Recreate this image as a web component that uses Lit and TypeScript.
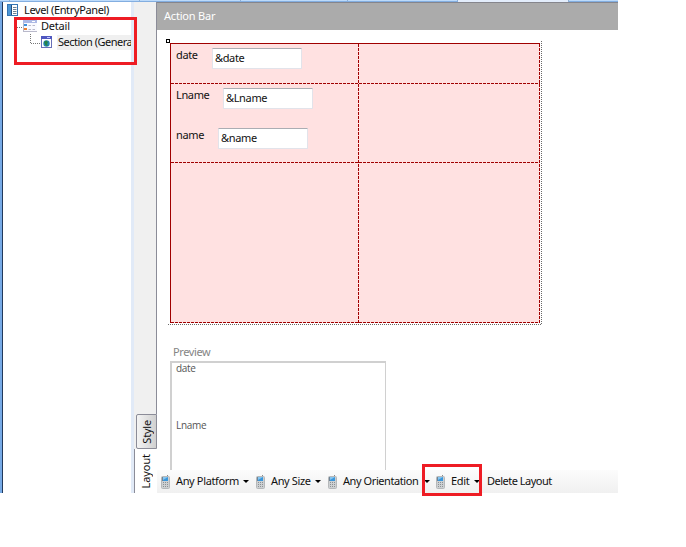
import { LitElement, html, css, svg } from "lit";
import { customElement, property } from "lit/decorators.js";

@customElement("phone-icon")
class PhoneIcon extends LitElement {
  static styles = css`
    :host { display: block; width: 9px; height: 14px; }
    svg { display: block; }
  `;
  render() {
    const keys = [7, 9, 11].flatMap((y) =>
      [2, 4, 6].map((x) => svg`<rect x=${x} y=${y} width="1" height="1" fill="#8b9093"/>`));
    return html`<svg width="9" height="14" viewBox="0 0 9 14">
      <rect x="6" y="0" width="1" height="2" fill="#85898c"/>
      <rect x="0.5" y="1.5" width="8" height="12" rx="1" fill="#cdd0d2" stroke="#b5b8ba" stroke-width="1"/>
      <rect x="2" y="2" width="5" height="4" fill="#3a97dc"/>
      <path d="M2 2H7L2 5Z" fill="#86c5f0"/>
      <path d="M1.5 6V2" stroke="#6f8496" stroke-width="1"/>
      ${keys}
    </svg>`;
  }
}

@customElement("form-field")
class FormField extends LitElement {
  @property() label = "";
  @property() variable = "";
  static styles = css`
    :host { display: flex; align-items: flex-start; height: 40px; box-sizing: border-box; padding: 4px 0 0 5px; }
    .label { line-height: 14px; white-space: nowrap; width: var(--label-width); }
    .input {
      box-sizing: border-box; width: 90px; height: 21px; background: #fff;
      border: 1px solid #e2e3ea; border-top-color: #abadb3; border-radius: 1px;
      padding-left: 2px; line-height: 18px; white-space: nowrap;
    }
  `;
  render() {
    return html`<span class="label">${this.label}</span><div class="input">${this.variable}</div>`;
  }
}

@customElement("app-root")
class AppRoot extends LitElement {
  static styles = css`
    :host {
      display: block; position: relative; width: 686px; height: 547px; overflow: hidden;
      background: #fff; color: #111; font: 11px/14px "Noto Sans", "Open Sans", sans-serif;
      letter-spacing: -0.2px; --red: #a00000;
    }
    .window { display: grid; width: 618px; height: 493px; grid-template: 2px 491px / 3px 128px 3px 23px 461px; }
    .top { grid-column: 1 / -1; display: flex; background: #bcdafa; border-bottom: 1px solid #83aee0; box-sizing: border-box; }
    .top i { box-sizing: border-box; border-right: 1px solid #8eaed3; height: 1px; }
    .t1 { width: 10px; } .t2 { width: 130px; } .t3 { width: 101px; } .t4 { width: 107px; } .t5 { width: 110px; }
    .top .t6 { width: 111px; height: 2px; background: #e3edfb; }
    .edge { box-sizing: border-box; background: #76aae6; border-right: 1px solid #22395c; }
    .tree { overflow: hidden; }
    .node { display: flex; align-items: center; height: 16px; white-space: nowrap; }
    .node svg { flex: none; }
    .root { padding-left: 4px; }
    .detail { padding-left: 12px; }
    .section { padding-left: 27px; }
    .node span { line-height: 14px; padding-bottom: 0; }
    .root span { padding-left: 5px; letter-spacing: -0.37px; }
    .detail span { padding-left: 4px; }
    .section span { background: #f0f0f0; padding: 0 0 1px 1px; margin-left: 4px; letter-spacing: -0.5px; flex: 1; }
    .split { background: #e1eaf7; }
    .tabs { display: flex; flex-direction: column; box-sizing: border-box; background: #f0f0f0; }
    .spacer { flex: 1; border-right: 1px solid #8b8c98; }
    .tab { box-sizing: border-box; display: flex; align-items: center; justify-content: center; }
    .tab span { writing-mode: vertical-rl; transform: rotate(180deg); white-space: nowrap; }
    .style { height: 35px; margin-left: 2px; border: 1px solid #8b8c98; border-radius: 2px 0 0 2px; background: linear-gradient(90deg, #f4f4f4, #d0d0d0); }
    .layout { height: 44px; border-left: 1px solid #8b8c98; background: #fff; }
    .layout span { letter-spacing: -0.1px; }
    .main { display: flex; flex-direction: column; background: #fff; }
    .main > * { flex: none; }
    .bar { box-sizing: border-box; height: 28px; background: #ababab; border-top: 1px solid #85858c; color: #fff; padding: 6px 0 0 7px; letter-spacing: -0.2px; }
    .canvas { position: relative; box-sizing: border-box; width: 374px; height: 284px; margin: 11px 0 0 11px; padding: 2px; }
    .frame-r, .frame-b, .handle, .line { position: absolute; }
    .frame-r { right: 0; top: 0; width: 1px; height: 284px; background: repeating-linear-gradient(180deg, #686868 0 1px, transparent 1px 2px); }
    .frame-b { left: 0; bottom: 0; height: 1px; width: 374px; background: repeating-linear-gradient(90deg, #686868 0 1px, transparent 1px 2px); }
    .handle { left: -2px; top: -2px; width: 2px; height: 2px; border: 1px solid #000; background: #fff; }
    .table { position: relative; display: grid; box-sizing: border-box; width: 370px; height: 280px; grid-template: 40px 79px 160px / 188px 181px; background: #ffe1e1; border-left: 1px solid var(--red); border-top: 1px solid var(--red); }
    .line.h { left: 0; width: 369px; height: 1px; background: repeating-linear-gradient(90deg, var(--red) 0 3px, transparent 3px 4px); }
    .line.v { top: 0; height: 279px; width: 1px; background: repeating-linear-gradient(180deg, var(--red) 0 3px, transparent 3px 4px); }
    .h1 { top: 39px; } .h2 { top: 118px; } .h3 { bottom: 0; }
    .v1 { left: 187px; } .v2 { right: 0; }
    .date { --label-width: 36px; } .lname { --label-width: 47px; } .name { --label-width: 42px; }
    .date, .lname, .name { letter-spacing: -0.35px; }
    .preview-title { color: #858585; margin: 20px 0 0 16px; height: 16px; line-height: 14px; letter-spacing: -0.4px; }
    .preview { box-sizing: border-box; width: 216px; height: 109px; overflow: hidden; margin-left: 13px; border: solid #d0d0d0; border-width: 2px 1px 0 2px; color: #555; font-family: "Open Sans", sans-serif; font-size: 10px; padding-left: 4px; letter-spacing: -0.3px; }
    .preview div { height: 57px; line-height: 10px; }
    .toolbar { box-sizing: border-box; height: 23px; display: flex; align-items: center; background: linear-gradient(#fcfcfc, #f0f0f0); padding-left: 4px; white-space: nowrap; letter-spacing: -0.36px; }
    .item { display: flex; align-items: center; flex: none; }
    .item span { padding: 0 0 2px 6px; flex: 1 1 0; }
    .arrow { width: 0; height: 0; border: 3px solid transparent; border-top-color: #000; border-bottom: 0; flex: none; }
    .platform { width: 88px; margin-right: 7px; }
    .size { width: 65px; margin-right: 7px; }
    .orientation { width: 102px; margin-right: 6px; letter-spacing: -0.42px; }
    .edit { width: 44px; margin-right: 7px; }
    .delete { letter-spacing: -0.5px; padding-bottom: 2px; }
    .mark { position: absolute; box-sizing: border-box; border: 3px solid #ee1c24; }
    .mark-tree { left: 14px; top: 17px; width: 123px; height: 48px; }
    .mark-edit { left: 422px; top: 464px; width: 60px; height: 32px; }
  `;

  item(name: string, label: string) {
    return html`<div class="item ${name}"><phone-icon></phone-icon><span>${label}</span><i class="arrow"></i></div>`;
  }

  render() {
    return html`
      <div class="window">
        <div class="top"><i class="t1"></i><i class="t2"></i><i class="t3"></i><i class="t4"></i><i class="t5"></i><i class="t6"></i></div>
        <div class="edge"></div>
        <div class="tree">
          <div class="node root">
            <svg width="12" height="14" viewBox="0 0 12 14">
              <rect x=".5" y="1.5" width="10" height="11" fill="#fff" stroke="#3475b5"/>
              <rect x="1" y="2" width="3" height="10" fill="#4c96d6"/>
              <path d="M4.5 2V12" stroke="#234f80"/><path d="M6 4.5H9.5M6 6.5H9.5M6 8.5H9.5M6 10.5H9.5" stroke="#6e8193"/>
            </svg><span>Level (EntryPanel)</span>
          </div>
          <div class="node detail">
            <svg width="22" height="16" viewBox="0 0 22 16">
              <path d="M.5 0V10M2 9.5H8" stroke="#777" stroke-dasharray="1 1"/>
              <rect x="8" y="2" width="14" height="12" fill="#fafaff"/>
              <rect x="8" y="2" width="14" height="3" fill="#adb9e5"/><rect x="17" y="3" width="3" height="1" fill="#fff"/>
              <rect x="9" y="6" width="3" height="2" fill="#3c8ed8"/><rect x="9" y="10" width="3" height="2" fill="#ef7e2c"/>
              <path d="M13.5 7.5H16M17.5 7.5H20M13.5 11.5H16M17.5 11.5H20M8.5 14V5M8 13.5H22" stroke="#b9b9ca"/>
            </svg><span>Detail</span>
          </div>
          <div class="node section">
            <svg width="23" height="16" viewBox="0 0 23 16">
              <path d="M.5 0V10M1 9.5H10" stroke="#777" stroke-dasharray="1 1"/>
              <rect x="11.5" y="2.5" width="10" height="11" fill="#fff" stroke="#6870b8"/>
              <rect x="11" y="2" width="11" height="3" fill="#4f57c0"/><rect x="17" y="3" width="3" height="1" fill="#bfc5ff"/>
              <circle cx="16.5" cy="9.5" r="3.2" fill="#2586b5"/><path d="M14 8L16 6.5L18 8L17 10L18 12L15.5 11.5Z" fill="#258447"/>
            </svg><span>Section (Genera</span>
          </div>
        </div>
        <div class="split"></div>
        <div class="tabs">
          <div class="spacer"></div>
          <div class="tab style"><span>Style</span></div>
          <div class="tab layout"><span>Layout</span></div>
        </div>
        <div class="main">
          <div class="bar">Action Bar</div>
          <div class="canvas">
            <div class="table">
              <form-field class="date" label="date" variable="&amp;date"></form-field><div></div>
              <div>
                <form-field class="lname" label="Lname" variable="&amp;Lname"></form-field>
                <form-field class="name" label="name" variable="&amp;name"></form-field>
              </div>
              <i class="line h h1"></i><i class="line h h2"></i><i class="line h h3"></i>
              <i class="line v v1"></i><i class="line v v2"></i>
            </div>
            <i class="frame-r"></i><i class="frame-b"></i><i class="handle"></i>
          </div>
          <div class="preview-title">Preview</div>
          <div class="preview"><div>date</div><div>Lname</div></div>
          <div class="toolbar">
            ${this.item("platform", "Any Platform")}
            ${this.item("size", "Any Size")}
            ${this.item("orientation", "Any Orientation")}
            ${this.item("edit", "Edit")}
            <span class="delete">Delete Layout</span>
          </div>
        </div>
      </div>
      <div class="mark mark-tree"></div>
      <div class="mark mark-edit"></div>
    `;
  }
}
